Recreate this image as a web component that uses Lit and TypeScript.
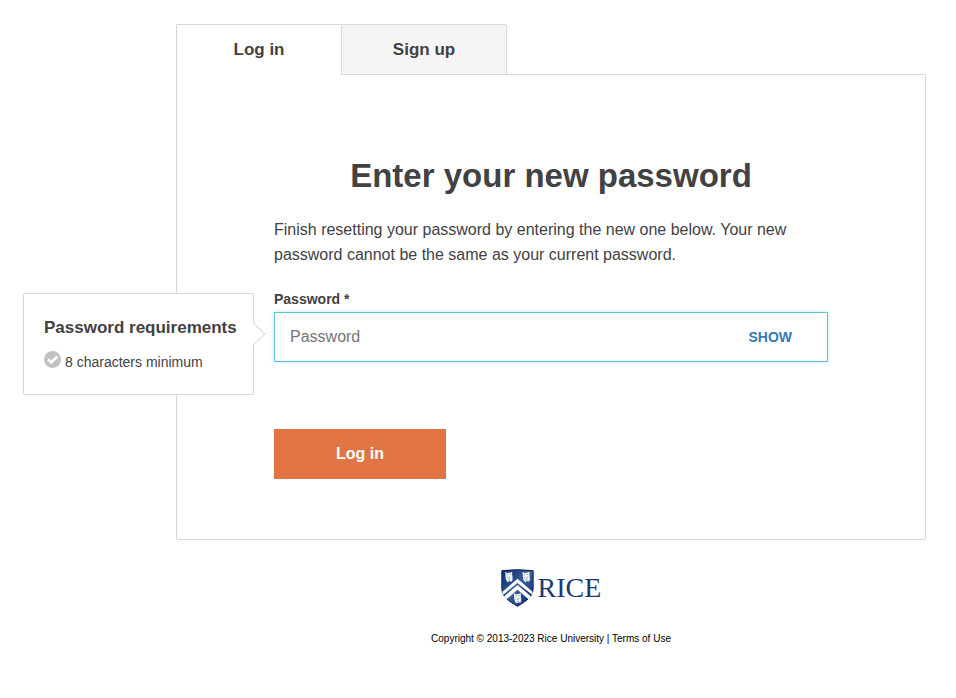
import { LitElement, html, css, svg } from "lit";
import { customElement, state } from "lit/decorators.js";

const owl = (x: number, y: number) => svg`
  <g transform="translate(${x} ${y}) scale(1.25)">
    <path d="M-9 -11 L-4 -8 L3 -9 L8 -11 L8 -2 Q11 6 7 13 L2 11 L-2 14 L-6 10 Q-9 2 -8 -3 Z" fill="#eef1f5"/>
    <path d="M-5 -5 h3 M2 -5 h3 M-4 2 l3 3 M3 1 l-2 4 M-2 9 h5" stroke="#8f9cb4" stroke-width="2" fill="none"/>
  </g>`;

@customElement("rice-logo")
class RiceLogo extends LitElement {
  static styles = css`
    :host { display: block; }
    .logo {
      display: flex;
      align-items: flex-end;
      gap: 4px;
      color: #1c3a70;
      text-decoration: none;
      font: 28px/34px "Liberation Serif", serif;
    }
    .shield { display: block; width: 33px; height: 38px; }
    .word { margin-bottom: 2px; }
  `;
  render() {
    return html`<a class="logo" href="#rice">
      <svg class="shield" viewBox="8 10 98 114" aria-hidden="true">
        <defs>
          <linearGradient id="blue" x1="0" x2="1" y1="0" y2="1">
            <stop offset="0" stop-color="#0b2b66"/>
            <stop offset=".5" stop-color="#3a5f9c"/>
            <stop offset="1" stop-color="#04205a"/>
          </linearGradient>
        </defs>
        <path d="M10 15 Q57 9 104 15 V68 C104 94 82 107 57 122 C32 107 10 94 10 68 Z" fill="url(#blue)" stroke="#0a2458" stroke-width="3"/>
        <path d="M12 78 L57 39 L102 78 V88 L57 52 L13 88 Z" fill="#fff"/>
        <path d="M17 92 L57 58 L97 92 L90 101 L57 72 L24 101 Z" fill="#fff"/>
        ${owl(31, 32)} ${owl(83, 32)} ${owl(57, 96)}
      </svg>
      <span class="word">RICE</span>
    </a>`;
  }
}

@customElement("password-field")
class PasswordField extends LitElement {
  @state() private shown = false;

  static styles = css`
    :host { display: block; color: #424242; }
    .label {
      display: block;
      margin-bottom: 3px;
      font-size: 14px;
      line-height: 20px;
      font-weight: 700;
    }
    .field {
      position: relative;
      display: flex;
      align-items: center;
      height: 48px;
      border: 1px solid #5fc3da;
      box-shadow: 0 0 4px rgba(95, 195, 218, 0.4);
      background: #fff;
    }
    .input {
      flex: 1;
      min-width: 0;
      height: 100%;
      box-sizing: border-box;
      border: 0;
      outline: 0;
      padding: 0 15px;
      background: none;
      font: 16px "Liberation Sans", Arial, sans-serif;
      color: inherit;
    }
    .input::placeholder { color: #757575; }
    .toggle {
      margin-right: 35px;
      padding: 0;
      border: 0;
      background: none;
      color: #337ab7;
      font: 700 14px "Liberation Sans", Arial, sans-serif;
      cursor: pointer;
    }
    .tip {
      position: absolute;
      right: calc(100% + 21px);
      top: -20px;
      box-sizing: border-box;
      width: 231px;
      padding: 20px 20px 21px;
      border: 1px solid #d8d8d8;
      border-radius: 2px;
      background: #fff;
    }
    .tip::after {
      content: "";
      position: absolute;
      right: -9px;
      top: 32px;
      width: 15px;
      height: 15px;
      border: 1px solid #d8d8d8;
      border-width: 1px 1px 0 0;
      background: #fff;
      transform: rotate(45deg);
    }
    .tip-title {
      margin: 0 0 9px;
      font-size: 17px;
      line-height: 28px;
      font-weight: 700;
      white-space: nowrap;
    }
    .rules { margin: 0; padding: 0; list-style: none; }
    .rule {
      display: flex;
      gap: 4px;
      font-size: 14px;
      line-height: 22px;
    }
    .check { display: block; width: 17px; height: 17px; }
  `;

  render() {
    return html`
      <label class="label" for="password">Password *</label>
      <div class="field">
        <input class="input" id="password" type=${this.shown ? "text" : "password"}
          placeholder="Password" aria-describedby="tip" required />
        <button class="toggle" type="button" @click=${() => (this.shown = !this.shown)}>
          ${this.shown ? "HIDE" : "SHOW"}
        </button>
        <div class="tip" id="tip" role="tooltip">
          <h2 class="tip-title">Password requirements</h2>
          <ul class="rules">
            <li class="rule">
              <svg class="check" viewBox="0 0 17 17" aria-hidden="true">
                <circle cx="8.5" cy="8.5" r="8.5" fill="#c1c1c1"/>
                <path d="M4 8.2 L7.4 11.4 L13.2 5.6" fill="none" stroke="#fff" stroke-width="2.8"/>
              </svg>
              8 characters minimum
            </li>
          </ul>
        </div>
      </div>`;
  }
}

@customElement("app-root")
class AppRoot extends LitElement {
  static styles = css`
    :host {
      display: block;
      padding: 24px 30px 24px 176px;
      background: #fff;
      color: #424242;
      font-family: "Liberation Sans", Arial, sans-serif;
    }
    .tabs { display: flex; position: relative; }
    .tab {
      box-sizing: border-box;
      width: 166px;
      height: 51px;
      border: 1px solid #d8d8d8;
      color: inherit;
      font-size: 17px;
      line-height: 50px;
      font-weight: 700;
      text-align: center;
      text-decoration: none;
    }
    .active {
      border-width: 1px 0 0 1px;
      border-radius: 2px 0 0 0;
      width: 165px;
      background: #fff;
    }
    .other { border-radius: 0 2px 0 0; background: #f5f5f5; }
    .card {
      margin-top: -1px;
      padding: 76px 97px 60px;
      border: 1px solid #d8d8d8;
      border-radius: 0 2px 2px 2px;
    }
    .title {
      margin: 0 0 16px;
      font-size: 33px;
      line-height: 50px;
      text-align: center;
    }
    .intro { margin: 0 0 22px; font-size: 16px; line-height: 25px; }
    .submit {
      display: block;
      width: 172px;
      height: 50px;
      margin-top: 67px;
      padding: 0;
      border: 0;
      background: #e27443;
      color: #fff;
      font: 700 16px "Liberation Sans", Arial, sans-serif;
      cursor: pointer;
    }
    .footer {
      display: flex;
      flex-direction: column;
      align-items: center;
      gap: 23px;
      margin-top: 29px;
      color: #000;
      font-size: 10px;
      line-height: 18px;
    }
    .legal { margin: 0; }
    .link { color: inherit; text-decoration: none; }
  `;

  render() {
    return html`
      <nav class="tabs">
        <a class="tab active" href="#login" aria-current="page">Log in</a>
        <a class="tab other" href="#signup">Sign up</a>
      </nav>
      <main class="card">
        <h1 class="title">Enter your new password</h1>
        <p class="intro">
          Finish resetting your password by entering the new one below. Your new
          password cannot be the same as your current password.
        </p>
        <form @submit=${(e: Event) => e.preventDefault()}>
          <password-field></password-field>
          <button class="submit" type="submit">Log in</button>
        </form>
      </main>
      <footer class="footer">
        <rice-logo></rice-logo>
        <p class="legal">
          <a class="link" href="#copyright">Copyright © 2013-2023 Rice University</a> |
          <a class="link" href="#terms">Terms of Use</a>
        </p>
      </footer>`;
  }
}
